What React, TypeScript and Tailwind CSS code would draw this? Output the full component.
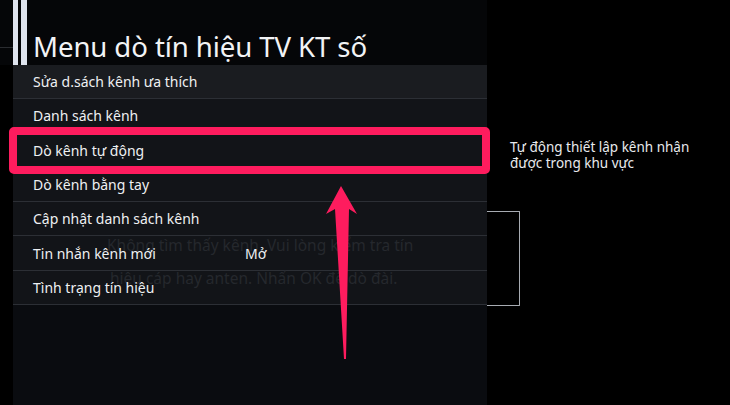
import React from "react";

const ROWS: { label: string; value?: string }[] = [
  { label: "Sửa d.sách kênh ưa thích" },
  { label: "Danh sách kênh" },
  { label: "Dò kênh tự động" },
  { label: "Dò kênh bằng tay" },
  { label: "Cập nhật danh sách kênh" },
  { label: "Tin nhắn kênh mới", value: "Mở" },
  { label: "Tình trạng tín hiệu" },
];

function Arrow() {
  return (
    <svg
      className="pointer-events-none absolute left-0 top-0 z-30"
      width="730"
      height="405"
      viewBox="0 0 730 405"
    >
      <polygon
        points="341,186 357,214 349,209 346,359 344,359 335,209 326,214"
        fill="#fe1c5e"
      />
    </svg>
  );
}

export default function App() {
  return (
    <div
      className="relative flex h-[405px] w-[730px] overflow-hidden bg-black text-[#eef0f2]"
      style={{ fontFamily: '"Noto Sans", "Open Sans", sans-serif' }}
    >
      {/* left: title + menu panel */}
      <div className="flex w-[487px] flex-col">
        <div className="flex h-[65px] bg-[#050608]">
          <div className="flex w-[13px] flex-col">
            <div className="h-[47px]" />
            <div className="h-px bg-[#2a2c30]" />
          </div>
          <div className="flex h-full gap-[3px]">
            <div className="w-[5px] bg-[#dfe4ee]" />
            <div className="w-[6px] bg-[#dfe4ee]" />
          </div>
          <h1 className="ml-[6px] self-end pb-[4px] text-[27.6px] leading-none tracking-[-0.1px] text-[#f2f3f5]">
            Menu dò tín hiệu TV KT số
          </h1>
        </div>

        <div className="relative ml-[13px] flex flex-1 flex-col bg-[#0a0c10]">
          {ROWS.map((row, i) => (
            <div
              key={row.label}
              className={
                i === 0
                  ? "flex h-[34.3px] items-center border-b border-[#2c2f35] bg-[#1a1c20] pl-[20px] text-[14px]"
                  : "flex h-[34.3px] items-center border-b border-[#2c2f35] bg-[#121418] pl-[20px] text-[14px]"
              }
            >
              <span className="relative z-20 w-[212px]">{row.label}</span>
              {row.value && <span className="relative z-20">{row.value}</span>}
            </div>
          ))}

          {/* faded message showing through the rows */}
          <div className="pointer-events-none absolute left-[92px] top-[164px] z-10 flex w-[370px] flex-col items-start text-[15.5px] leading-[33px] text-[#25282d]">
            <span className="pl-[2px]">Không tìm thấy kênh. Vui lòng kiểm tra tín</span>
            <span className="pl-[5px]">hiệu cáp hay anten. Nhấn OK để dò đài.</span>
          </div>
        </div>
      </div>

      {/* right: description + outlined box */}
      <div className="flex flex-1 flex-col">
        <p className="ml-[23px] mt-[139px] w-[210px] text-[13.5px] leading-[16px] text-[#e8eaed]">
          Tự động thiết lập kênh nhận được trong khu vực
        </p>
        <div className="mt-[40px] h-[95px] w-[33px] rounded-r-[1px] border border-l-0 border-[#a7abb2]" />
      </div>

      {/* highlight frame over the selected row */}
      <div className="pointer-events-none absolute left-[9px] top-[127px] z-20 h-[47px] w-[481px] rounded-[5px] border-[8px] border-[#fe1c5e]" />

      <Arrow />
    </div>
  );
}
